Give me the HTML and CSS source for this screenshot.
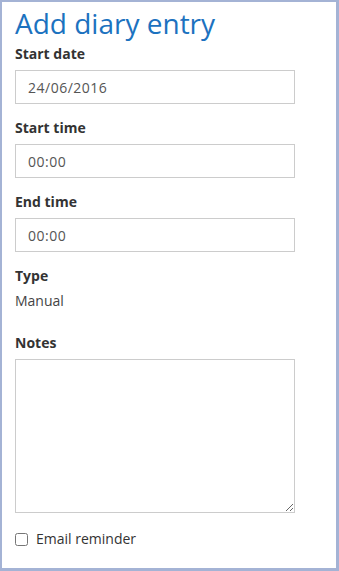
FILE: index.html
```html
<!DOCTYPE html>
<html lang="en">
<head>
    <meta charset="UTF-8">
    <meta name="viewport" content="width=device-width, initial-scale=1.0">
    <title>Add diary entry</title>
    <link rel="stylesheet" href="styles.css">
</head>
<body>
    <div class="diary-dialog">
        <h1>Add diary entry</h1>

        <label for="startDate">Start date</label>
        <input type="text" id="startDate" value="24/06/2016" />

        <label for="startTime">Start time</label>
        <input type="text" id="startTime" value="00:00" />

        <label for="endTime">End time</label>
        <input type="text" id="endTime" value="00:00" />

        <label>Type</label>
        <div class="static-value">Manual</div>

        <label for="notes" class="notes-label">Notes</label>
        <textarea id="notes"></textarea>

        <div class="checkbox-row">
            <input type="checkbox" id="emailReminder" />
            <label for="emailReminder">Email reminder</label>
        </div>
    </div>
</body>
</html>
```

FILE: styles.css
```css
html, body {
    margin: 0;
    height: 100%;
}
body {
    font-family: "Open Sans", "Liberation Sans", sans-serif;
    background-color: #ffffff;
    color: #333;
}
.diary-dialog {
    box-sizing: border-box;
    height: 100%;
    border-style: solid;
    border-color: #a4b3d5;
    border-width: 2px 3px 3px 2px;
    padding: 0 13px;
}
h1 {
    margin: 0 0 1px 0;
    font-size: 28px;
    font-weight: normal;
    line-height: 42px;
    color: #1c72bf;
}
label {
    display: block;
    font-size: 14px;
    font-weight: bold;
    line-height: 18px;
    color: #333;
}
input[type="text"] {
    display: block;
    box-sizing: border-box;
    width: 280px;
    height: 34px;
    margin: 7px 0 15px 0;
    padding: 0 12px;
    border: 1px solid #ccc;
    border-radius: 0;
    font-family: inherit;
    font-size: 14px;
    letter-spacing: 0.5px;
    color: #555;
    outline: none;
}
.static-value {
    margin-top: 6px;
    font-size: 14px;
    line-height: 20px;
    color: #444;
}
.notes-label {
    margin-top: 23px;
}
textarea {
    display: block;
    box-sizing: border-box;
    width: 280px;
    height: 154px;
    margin: 7px 0 0 0;
    border: 1px solid #ccc;
    border-radius: 0;
    font-family: inherit;
    font-size: 13px;
    outline: none;
}
.checkbox-row {
    display: flex;
    align-items: center;
    margin-top: 16px;
}
.checkbox-row input {
    width: 13px;
    height: 13px;
    margin: 0 8px 0 0;
}
.checkbox-row label {
    font-size: 14px;
    font-weight: normal;
    line-height: 20px;
    color: #333;
}
```
